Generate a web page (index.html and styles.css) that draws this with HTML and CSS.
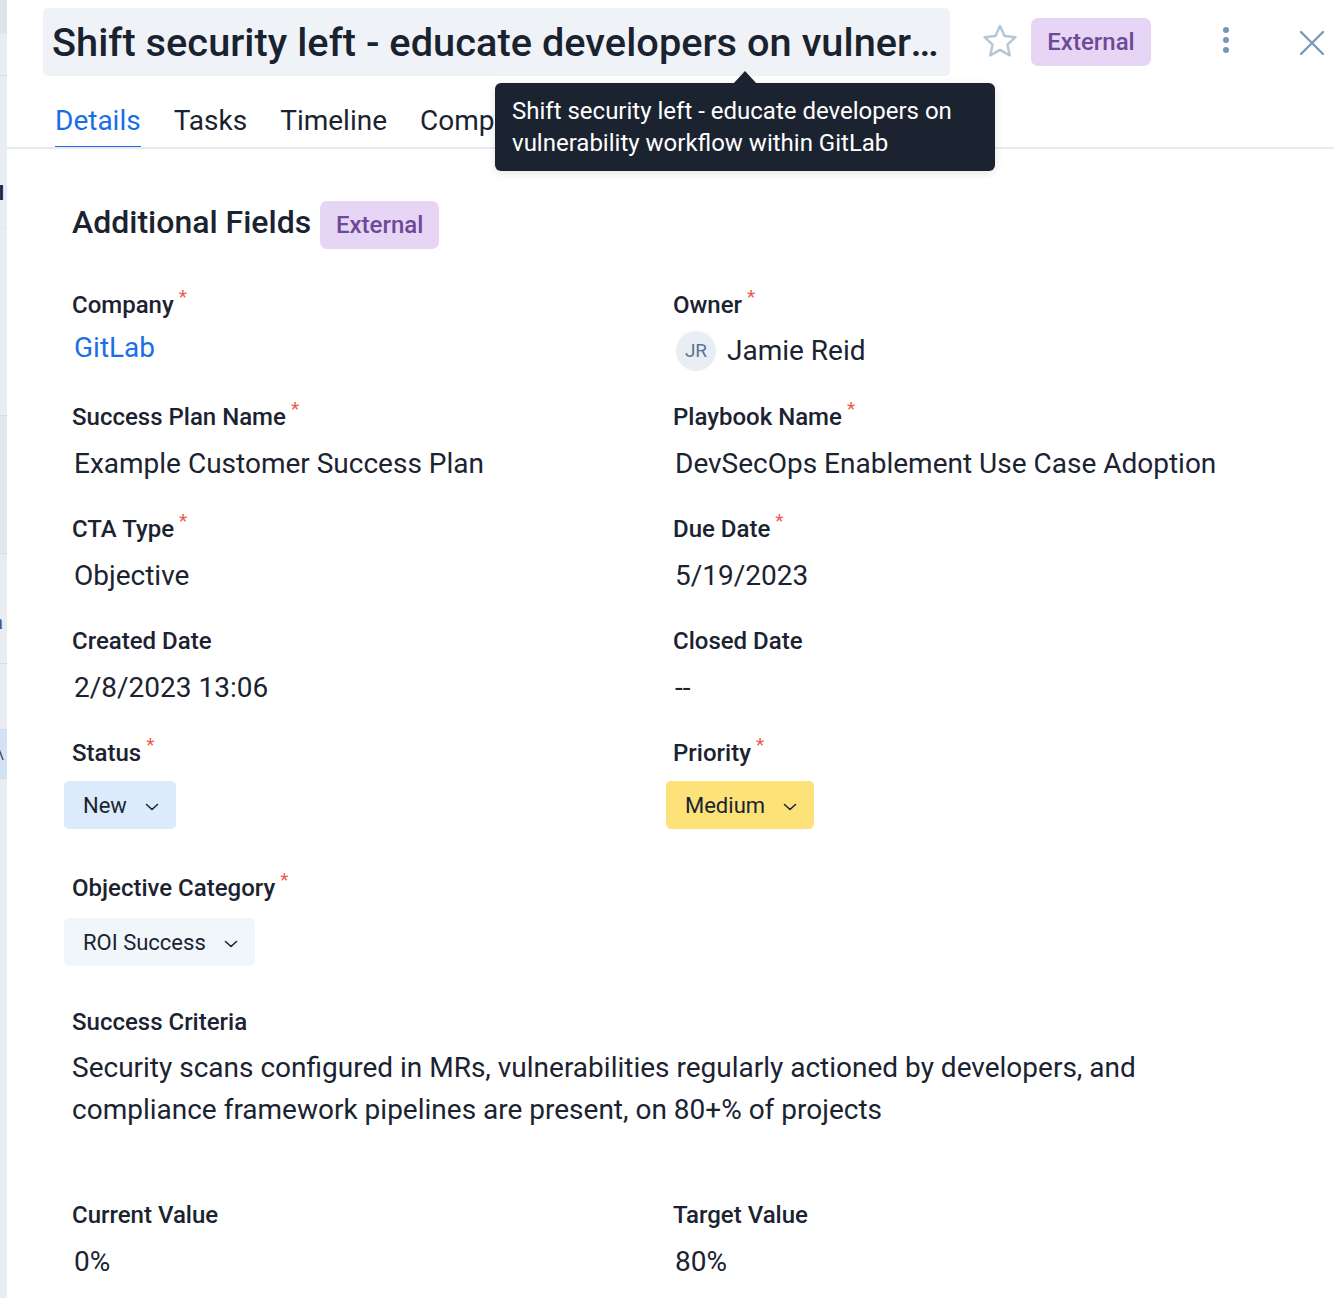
FILE: index.html
```html
<!DOCTYPE html>
<html>
<head>
<meta charset="utf-8">
<link rel="stylesheet" href="styles.css">
</head>
<body>
<div class="page">
  <div class="edge">
    <div class="e1"></div>
    <div class="e2"></div>
    <div class="e3"><span>al</span></div>
    <div class="e4"></div>
    <div class="e5"></div>
    <div class="e6"><span>a</span></div>
    <div class="e7"></div>
    <div class="e8"><span>\</span></div>
    <div class="e9"></div>
  </div>
  <div class="panel">
    <header class="head">
      <div class="title-box"><span class="title">Shift security left - educate developers on vulnerability workflow within GitLab</span></div>
      <svg class="star" width="38" height="36" viewBox="0 0 38 36"><path d="M19 3 L23.6 13 L34.5 14.2 L26.4 21.6 L28.7 32.4 L19 26.9 L9.3 32.4 L11.6 21.6 L3.5 14.2 L14.4 13 Z" fill="none" stroke="#b4c6d8" stroke-width="2.4" stroke-linejoin="round"/></svg>
      <span class="badge badge-head">External</span>
      <svg class="kebab" width="10" height="30" viewBox="0 0 10 30"><circle cx="5" cy="5" r="3" fill="#7895b5"/><circle cx="5" cy="15" r="3" fill="#7895b5"/><circle cx="5" cy="25" r="3" fill="#7895b5"/></svg>
      <svg class="close" width="26" height="26" viewBox="0 0 26 26"><path d="M2 2 L24 24 M24 2 L2 24" stroke="#7895b5" stroke-width="2.2" stroke-linecap="round"/></svg>
    </header>
    <nav class="tabs">
      <span class="tab active">Details</span>
      <span class="tab">Tasks</span>
      <span class="tab">Timeline</span>
      <span class="tab">Company</span>
      <span class="tab">Attachments</span>
    </nav>
    <div class="tooltip">Shift security left - educate developers on vulnerability workflow within GitLab</div>

    <main class="content">
      <div class="section-head">
        <h2>Additional Fields</h2>
        <span class="badge badge-sec">External</span>
      </div>

      <div class="grid">
        <div class="field">
          <div class="label">Company<span class="req">*</span></div>
          <div class="value link">GitLab</div>
        </div>
        <div class="field">
          <div class="label">Owner<span class="req">*</span></div>
          <div class="value owner"><span class="avatar">JR</span>Jamie Reid</div>
        </div>
        <div class="field">
          <div class="label">Success Plan Name<span class="req">*</span></div>
          <div class="value">Example Customer Success Plan</div>
        </div>
        <div class="field">
          <div class="label">Playbook Name<span class="req">*</span></div>
          <div class="value">DevSecOps Enablement Use Case Adoption</div>
        </div>
        <div class="field">
          <div class="label">CTA Type<span class="req">*</span></div>
          <div class="value">Objective</div>
        </div>
        <div class="field">
          <div class="label">Due Date<span class="req">*</span></div>
          <div class="value">5/19/2023</div>
        </div>
        <div class="field">
          <div class="label">Created Date</div>
          <div class="value">2/8/2023 13:06</div>
        </div>
        <div class="field">
          <div class="label">Closed Date</div>
          <div class="value">--</div>
        </div>
        <div class="field">
          <div class="label">Status<span class="req">*</span></div>
          <div class="select sel-blue">New<svg class="chev" width="14" height="8" viewBox="0 0 14 8"><path d="M1.5 1.5 L7 6.5 L12.5 1.5" fill="none" stroke="#1b2331" stroke-width="1.6" stroke-linecap="round" stroke-linejoin="round"/></svg></div>
        </div>
        <div class="field">
          <div class="label">Priority<span class="req">*</span></div>
          <div class="select sel-yellow">Medium<svg class="chev" width="14" height="8" viewBox="0 0 14 8"><path d="M1.5 1.5 L7 6.5 L12.5 1.5" fill="none" stroke="#1b2331" stroke-width="1.6" stroke-linecap="round" stroke-linejoin="round"/></svg></div>
        </div>
      </div>

      <div class="field single cat">
        <div class="label">Objective Category<span class="req">*</span></div>
        <div class="select sel-light">ROI Success<svg class="chev" width="14" height="8" viewBox="0 0 14 8"><path d="M1.5 1.5 L7 6.5 L12.5 1.5" fill="none" stroke="#1b2331" stroke-width="1.6" stroke-linecap="round" stroke-linejoin="round"/></svg></div>
      </div>

      <div class="field single crit">
        <div class="label">Success Criteria</div>
        <p class="para">Security scans configured in MRs, vulnerabilities regularly actioned by developers, and compliance framework pipelines are present, on 80+% of projects</p>
      </div>

      <div class="grid values">
        <div class="field">
          <div class="label">Current Value</div>
          <div class="value">0%</div>
        </div>
        <div class="field">
          <div class="label">Target Value</div>
          <div class="value">80%</div>
        </div>
      </div>
    </main>
  </div>
</div>
</body>
</html>
```

FILE: styles.css
```css
* { box-sizing: border-box; }
html, body { margin: 0; padding: 0; background: #fff; }
body {
  font-family: Roboto, "Liberation Sans", Arial, sans-serif;
  color: #1b2331;
  width: 1334px;
  height: 1298px;
  overflow: hidden;
}
.page { display: flex; height: 1298px; }

/* background panel strip on the left */
.edge {
  width: 7px;
  flex: none;
  background: #e9ecf1;
  display: flex;
  flex-direction: column;
  overflow: hidden;
  font-size: 20px;
  font-weight: 700;
  color: #1b2331;
}
.edge div { flex: none; overflow: hidden; white-space: nowrap; }
.edge span { display: block; margin-left: -12px; }
.e1 { height: 34px; background: #dfe4eb; }
.e2 { height: 42px; border-bottom: 1px solid #d7dce4; }
.e3 { height: 152px; padding-top: 105px; border-bottom: 1px solid #e3e7ed; }
.e4 { height: 188px; border-bottom: 1px solid #d7dce4; }
.e5 { height: 138px; border-bottom: 1px solid #d7dce4; background: #e4e8ee; }
.e6 { height: 110px; padding-top: 56px; border-bottom: 1px solid #d7dce4; color: #4f5f78; }
.e6 span { margin-left: -8px; }
.e7 { height: 66px; border-bottom: 1px solid #d7dce4; }
.e8 { height: 48px; background: #d3e2f3; font-weight: 300; color: #1b2331; padding-top: 10px; }
.e8 span { margin-left: -4px; }
.e9 { height: 1px; background: #d7dce4; }

.panel { flex: 1; position: relative; }

/* header */
.head {
  display: flex;
  align-items: center;
  padding: 8px 0 0 36px;
  height: 76px;
}
.title-box {
  width: 907px;
  height: 68px;
  background: #eff2f6;
  border-radius: 5px;
  padding: 0 5px 0 9px;
  display: flex;
  align-items: center;
  overflow: hidden;
  flex: none;
}
.title {
  font-size: 39.7px;
  font-weight: 500;
  white-space: nowrap;
  overflow: hidden;
  text-overflow: ellipsis;
  letter-spacing: 0.05px;
  color: #1a2230;
}
.star { margin-left: 31px; margin-top: -2px; flex: none; }
.badge {
  display: inline-flex;
  align-items: center;
  justify-content: center;
  background: #e7d5f5;
  color: #6e4a96;
  border-radius: 7px;
  font-weight: 500;
}
.badge-head {
  margin-left: 12px;
  width: 120px;
  height: 48px;
  font-size: 24px;
  flex: none;
}
.kebab { margin-left: 70px; margin-top: -4px; flex: none; }
.close { margin-left: 68px; margin-top: 2px; flex: none; }

/* tabs */
.tabs {
  display: flex;
  gap: 33px;
  padding-left: 48px;
  height: 73px;
  border-bottom: 2px solid #e6ebf1;
  align-items: flex-end;
  overflow: hidden;
  white-space: nowrap;
}
.tab {
  font-size: 28px;
  color: #1b2331;
  padding-bottom: 9px;
  line-height: 32px;
  border-bottom: 4px solid transparent;
  margin-bottom: -3px;
}
.tab.active {
  color: #1a6fe6;
  border-bottom-color: #1a6fe6;
}

/* tooltip */
.tooltip {
  position: absolute;
  left: 488px;
  top: 83px;
  width: 500px;
  height: 88px;
  background: #1b2330;
  color: #fff;
  border-radius: 6px;
  font-size: 24px;
  line-height: 32px;
  padding: 12px 14px 0 17px;
  box-shadow: 0 2px 8px rgba(0,0,0,0.12);
}
.tooltip::before {
  content: "";
  position: absolute;
  left: 238px;
  top: -12px;
  border-left: 12px solid transparent;
  border-right: 12px solid transparent;
  border-bottom: 13px solid #1b2330;
}

/* content */
.content { padding: 52px 0 0 65px; }
.section-head {
  display: flex;
  align-items: baseline;
  gap: 9px;
  height: 48px;
}
.section-head h2 {
  margin: 0;
  font-size: 32px;
  font-weight: 500;
  color: #1b2331;
}
.badge-sec {
  width: 119px;
  height: 48px;
  font-size: 24px;
  border-radius: 7px;
}

.grid {
  display: grid;
  grid-template-columns: 601px 1fr;
  row-gap: 30px;
  margin-top: 41px;
}
.field { display: flex; flex-direction: column; align-items: flex-start; }
.label {
  font-size: 24px;
  font-weight: 500;
  line-height: 30px;
  height: 30px;
  color: #1b2331;
  white-space: nowrap;
}
.req {
  color: #f0584a;
  font-size: 19px;
  font-weight: 400;
  position: relative;
  top: -10px;
  margin-left: 5px;
}
.value {
  margin-top: 12px;
  height: 40px;
  line-height: 40px;
  font-size: 28px;
  color: #1b2331;
  padding-left: 2px;
  white-space: nowrap;
}
.value.link { color: #1a6fe6; margin-top: 8px; margin-bottom: 4px; }
.owner { display: flex; align-items: center; padding-left: 3px; margin-top: 11px; margin-bottom: 1px; }
.avatar {
  width: 40px;
  height: 40px;
  border-radius: 50%;
  background: #e9eef4;
  color: #5b7394;
  font-size: 19px;
  display: inline-flex;
  align-items: center;
  justify-content: center;
  margin-right: 11px;
  flex: none;
}
.select {
  margin-top: 13px;
  margin-left: -8px;
  height: 48px;
  border-radius: 5px;
  display: inline-flex;
  align-items: center;
  padding: 0 17px 0 19px;
  font-size: 22px;
  color: #1b2331;
  gap: 18px;
}
.sel-blue { background: #dcebfb; }
.sel-yellow { background: #fde27a; margin-left: -7px; }
.sel-light { background: #f1f6fb; }
.chev { flex: none; margin-top: 3px; }

.single { margin-top: 44px; }
.cat .select { margin-top: 15px; }
.crit { margin-top: 41px; }
.para {
  margin: 10px 0 0 0;
  font-size: 28px;
  line-height: 42px;
  color: #1b2331;
  width: 1120px;
}
.values { margin-top: 69px; }
.values .value { margin-top: 12px; }
```
